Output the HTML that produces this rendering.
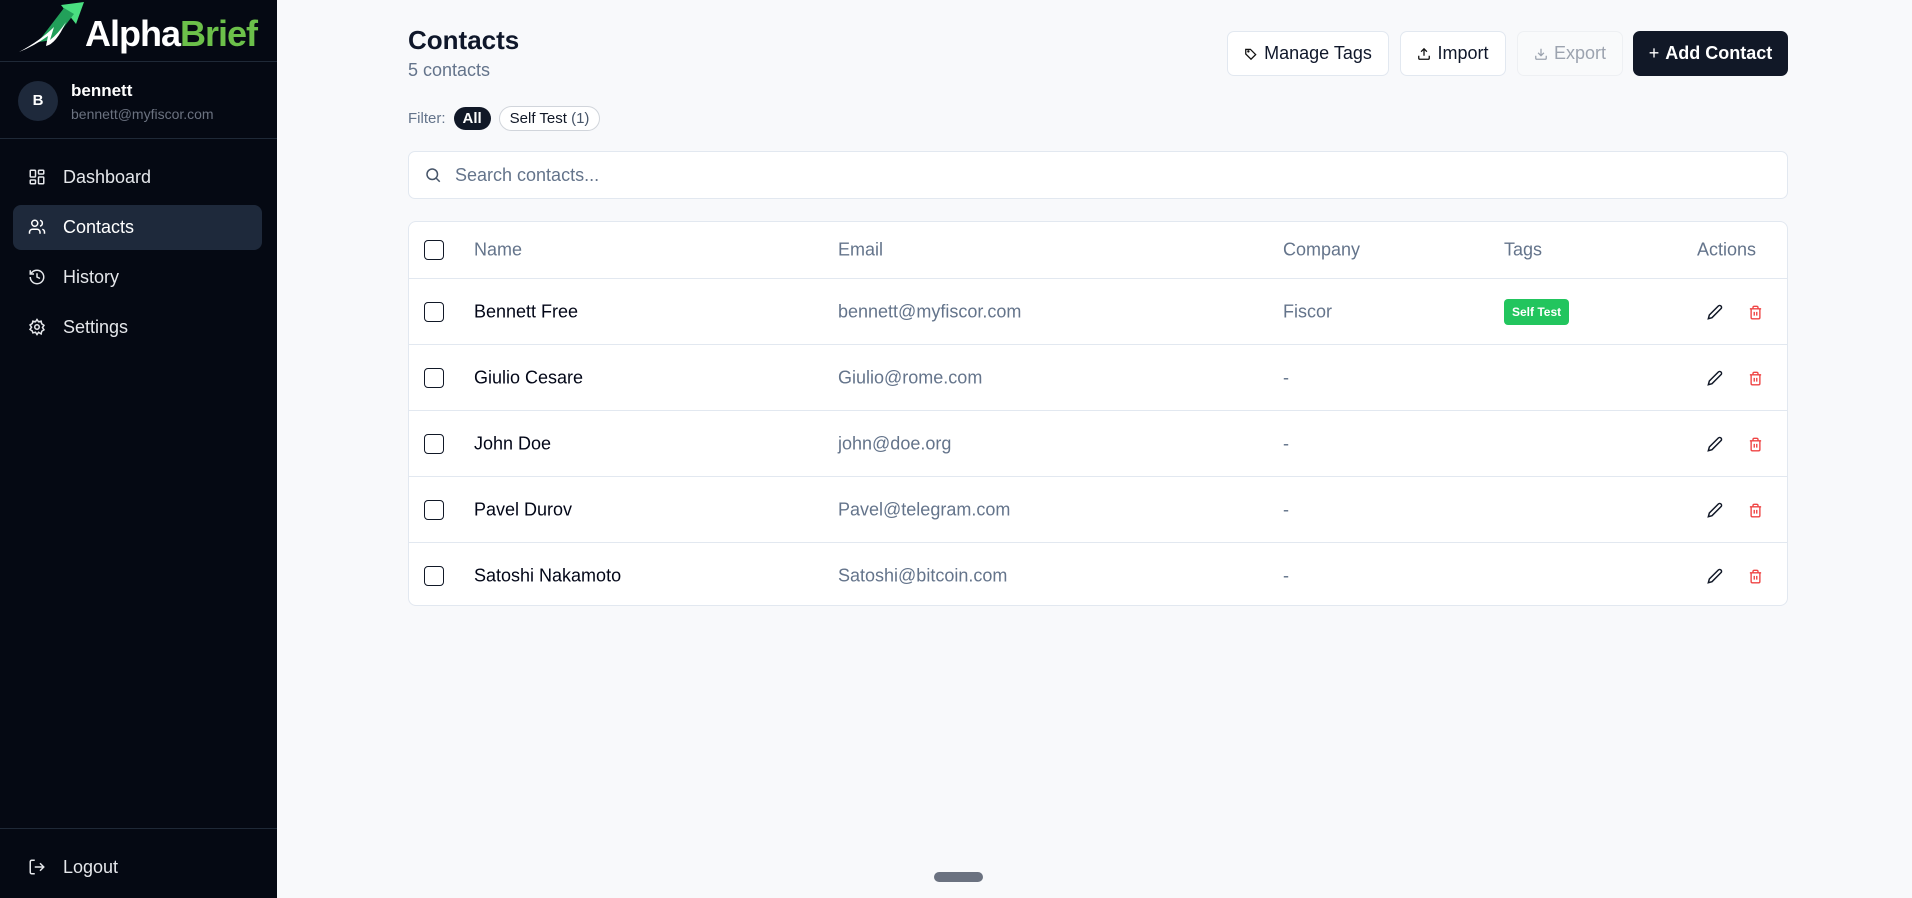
<!DOCTYPE html>
<html><head><meta charset="utf-8"><style>
*{box-sizing:border-box;margin:0;padding:0}
body{width:1912px;height:898px;overflow:hidden;background:#f8f9fb;font-family:"Liberation Sans",sans-serif;color:#0f172a;position:relative}
.sb{position:absolute;left:0;top:0;width:277px;height:898px;background:#050913;color:#fff}
.logo{height:62px;border-bottom:1px solid #1f2937;position:relative}
.logo .t{position:absolute;left:85px;top:13px;font-size:36px;font-weight:bold;letter-spacing:-1px}
.user{height:77px;border-bottom:1px solid #1f2937;position:relative}
.av{position:absolute;left:18px;top:19px;width:40px;height:40px;border-radius:50%;background:#1e293b;font-weight:bold;font-size:15px;text-align:center;line-height:40px}
.un{position:absolute;left:71px;top:19px;font-size:17px;font-weight:bold}
.ue{position:absolute;left:71px;top:44px;font-size:14px;color:#6b7280}
.nav{position:absolute;left:13px;width:249px;height:45px;border-radius:8px;font-size:18px;color:#e5e7eb;line-height:45px;padding-left:50px}
.nav svg{position:absolute;left:15px;top:13px}
.nav.act{background:#1e293b;color:#fff}
.lo{position:absolute;left:0;top:828px;width:277px;border-top:1px solid #1f2937;height:70px}
h1{position:absolute;left:408px;top:25px;font-size:26px;font-weight:bold}
.sub{position:absolute;left:408px;top:60px;font-size:18px;color:#64748b}
.flt{position:absolute;left:408px;top:106px;font-size:15px;color:#64748b;display:flex;align-items:center;gap:8px}
.pill{border-radius:14px;padding:3px 10px;font-size:15px}
.btn{position:absolute;top:31px;height:45px;border:1px solid #e2e8f0;background:#fff;border-radius:7px;font-size:18px;display:flex;align-items:center;justify-content:center;gap:6px}
.search{position:absolute;left:408px;top:151px;width:1380px;height:48px;border:1px solid #e2e8f0;background:#fff;border-radius:7px;font-size:18px;color:#64748b;padding-left:46px;line-height:46px}
.tbl{position:absolute;left:408px;top:221px;width:1380px;height:385px;border:1px solid #e2e8f0;background:#fff;border-radius:8px;overflow:hidden}
.row{position:absolute;left:0;width:100%;height:66px;border-top:1px solid #e2e8f0;font-size:18px}
.row span{position:absolute;top:50%;transform:translateY(-50%)}
.row .n{color:#020617}
.cb{width:20px;height:20px;border:1.6px solid #111827;border-radius:4px;left:15px}
.hd{height:56px;border-top:none;color:#64748b}
.pe{left:1298px;width:16px;height:16px}
.tr{left:1339px;width:15px;height:15px}
</style></head><body>
<div class="sb">
 <div class="logo">
  <svg width="70" height="55" viewBox="0 0 70 55" style="position:absolute;left:16px;top:2px"><path d="M45 3 L68 0 L60 22 Z" fill="#4ade80"/><path d="M22 40 L48 6 L58 12 L38 38 Z" fill="#22a05a"/><path d="M3 50 Q25 38 38 25 L34 38 Q42 32 50 20 Q40 42 30 44 L32 34 Q18 44 3 50 Z" fill="#fff"/></svg>
  <div class="t">Alpha<span style="color:#6cc04a">Brief</span></div>
 </div>
 <div class="user"><div class="av">B</div><div class="un">bennett</div><div class="ue">bennett@myfiscor.com</div></div>
 <div class="nav" style="top:155px"><svg width="18" height="18" viewBox="0 0 24 24" fill="none" stroke="#e5e7eb" stroke-width="2"><rect x="3" y="3" width="7" height="9" rx="1"/><rect x="14" y="3" width="7" height="5" rx="1"/><rect x="14" y="12" width="7" height="9" rx="1"/><rect x="3" y="16" width="7" height="5" rx="1"/></svg>Dashboard</div>
 <div class="nav act" style="top:205px"><svg width="18" height="18" viewBox="0 0 24 24" fill="none" stroke="#fff" stroke-width="2"><path d="M16 21v-2a4 4 0 0 0-4-4H6a4 4 0 0 0-4 4v2"/><circle cx="9" cy="7" r="4"/><path d="M22 21v-2a4 4 0 0 0-3-3.9M16 3.1a4 4 0 0 1 0 7.8"/></svg>Contacts</div>
 <div class="nav" style="top:255px"><svg width="18" height="18" viewBox="0 0 24 24" fill="none" stroke="#e5e7eb" stroke-width="2"><path d="M3 12a9 9 0 1 0 9-9 9.7 9.7 0 0 0-6.7 2.7L3 8"/><path d="M3 3v5h5M12 7v5l4 2"/></svg>History</div>
 <div class="nav" style="top:305px"><svg width="18" height="18" viewBox="0 0 24 24" fill="none" stroke="#e5e7eb" stroke-width="2"><circle cx="12" cy="12" r="3"/><path d="M12 2l2 3 3.5-.8.8 3.5 3 2-2 3 2 3-3 2-.8 3.5L14 19l-2 3-2-3-3.5.8L5.7 17.3l-3-2 2-3-2-3 3-2L6.5 4.2 10 5z"/></svg>Settings</div>
 <div class="lo"><div class="nav" style="top:16px;left:13px"><svg width="18" height="18" viewBox="0 0 24 24" fill="none" stroke="#e5e7eb" stroke-width="2"><path d="M9 21H5a2 2 0 0 1-2-2V5a2 2 0 0 1 2-2h4M16 17l5-5-5-5M21 12H9"/></svg>Logout</div></div>
</div>
<h1>Contacts</h1><div class="sub">5 contacts</div>
<div class="flt">Filter: <span class="pill" style="background:#111827;color:#fff;font-weight:bold;padding:3px 9px">All</span><span class="pill" style="border:1px solid #d1d5db;color:#111827;background:#fff">Self Test <span style="color:#475569">(1)</span></span></div>
<div class="btn" style="left:1227px;width:162px"><svg width="14" height="14" viewBox="0 0 24 24" fill="none" stroke="#111" stroke-width="2.2"><path d="M3 12V4h8l9 9-8 8z"/><circle cx="7.5" cy="7.5" r="1"/></svg>Manage Tags</div>
<div class="btn" style="left:1400px;width:106px"><svg width="14" height="14" viewBox="0 0 24 24" fill="none" stroke="#111" stroke-width="2.2"><path d="M21 15v4a2 2 0 0 1-2 2H5a2 2 0 0 1-2-2v-4M17 8l-5-5-5 5M12 3v12"/></svg>Import</div>
<div class="btn" style="left:1517px;width:106px;color:#9ca3af;background:#f9fafb;border-color:#eef0f3"><svg width="14" height="14" viewBox="0 0 24 24" fill="none" stroke="#9ca3af" stroke-width="2.2"><path d="M21 15v4a2 2 0 0 1-2 2H5a2 2 0 0 1-2-2v-4M7 10l5 5 5-5M12 15V3"/></svg>Export</div>
<div class="btn" style="left:1633px;width:155px;background:#111827;color:#fff;border-color:#111827;font-weight:bold"><span style="font-weight:normal">+</span> Add Contact</div>
<div class="search"><svg width="18" height="18" viewBox="0 0 24 24" fill="none" stroke="#475569" stroke-width="2" style="position:absolute;left:15px;top:14px"><circle cx="11" cy="11" r="7"/><path d="M21 21l-4.5-4.5"/></svg>Search contacts...</div>
<div class="tbl">
 <div class="row hd" style="top:0"><span class="cb"></span><span style="left:65px">Name</span><span style="left:429px">Email</span><span style="left:874px">Company</span><span style="left:1095px">Tags</span><span style="left:1288px">Actions</span></div>
 <div class="row" style="top:56px"><span class="cb"></span><span class="n" style="left:65px">Bennett Free</span><span style="left:429px;color:#64748b">bennett@myfiscor.com</span><span style="left:874px;color:#64748b">Fiscor</span><span style="left:1095px;background:#22c55e;color:#fff;font-size:12px;font-weight:bold;padding:6px 8px;border-radius:4px">Self Test</span>
  <svg class="pe" style="position:absolute;top:25px" viewBox="0 0 24 24" fill="none" stroke="#111827" stroke-width="2.2"><path d="M17 3a2.8 2.8 0 0 1 4 4L7.5 20.5 2 22l1.5-5.5z"/></svg><svg class="tr" style="position:absolute;top:26px" viewBox="0 0 24 24" fill="none" stroke="#ef4444" stroke-width="2.2"><path d="M3 6h18M19 6v14a2 2 0 0 1-2 2H7a2 2 0 0 1-2-2V6M8 6V4a2 2 0 0 1 2-2h4a2 2 0 0 1 2 2v2M10 11v6M14 11v6"/></svg></div>
 <div class="row" style="top:122px"><span class="cb"></span><span class="n" style="left:65px">Giulio Cesare</span><span style="left:429px;color:#64748b">Giulio@rome.com</span><span style="left:874px;color:#64748b">-</span>
  <svg class="pe" style="position:absolute;top:25px" viewBox="0 0 24 24" fill="none" stroke="#111827" stroke-width="2.2"><path d="M17 3a2.8 2.8 0 0 1 4 4L7.5 20.5 2 22l1.5-5.5z"/></svg><svg class="tr" style="position:absolute;top:26px" viewBox="0 0 24 24" fill="none" stroke="#ef4444" stroke-width="2.2"><path d="M3 6h18M19 6v14a2 2 0 0 1-2 2H7a2 2 0 0 1-2-2V6M8 6V4a2 2 0 0 1 2-2h4a2 2 0 0 1 2 2v2M10 11v6M14 11v6"/></svg></div>
 <div class="row" style="top:188px"><span class="cb"></span><span class="n" style="left:65px">John Doe</span><span style="left:429px;color:#64748b">john@doe.org</span><span style="left:874px;color:#64748b">-</span>
  <svg class="pe" style="position:absolute;top:25px" viewBox="0 0 24 24" fill="none" stroke="#111827" stroke-width="2.2"><path d="M17 3a2.8 2.8 0 0 1 4 4L7.5 20.5 2 22l1.5-5.5z"/></svg><svg class="tr" style="position:absolute;top:26px" viewBox="0 0 24 24" fill="none" stroke="#ef4444" stroke-width="2.2"><path d="M3 6h18M19 6v14a2 2 0 0 1-2 2H7a2 2 0 0 1-2-2V6M8 6V4a2 2 0 0 1 2-2h4a2 2 0 0 1 2 2v2M10 11v6M14 11v6"/></svg></div>
 <div class="row" style="top:254px"><span class="cb"></span><span class="n" style="left:65px">Pavel Durov</span><span style="left:429px;color:#64748b">Pavel@telegram.com</span><span style="left:874px;color:#64748b">-</span>
  <svg class="pe" style="position:absolute;top:25px" viewBox="0 0 24 24" fill="none" stroke="#111827" stroke-width="2.2"><path d="M17 3a2.8 2.8 0 0 1 4 4L7.5 20.5 2 22l1.5-5.5z"/></svg><svg class="tr" style="position:absolute;top:26px" viewBox="0 0 24 24" fill="none" stroke="#ef4444" stroke-width="2.2"><path d="M3 6h18M19 6v14a2 2 0 0 1-2 2H7a2 2 0 0 1-2-2V6M8 6V4a2 2 0 0 1 2-2h4a2 2 0 0 1 2 2v2M10 11v6M14 11v6"/></svg></div>
 <div class="row" style="top:320px"><span class="cb"></span><span class="n" style="left:65px">Satoshi Nakamoto</span><span style="left:429px;color:#64748b">Satoshi@bitcoin.com</span><span style="left:874px;color:#64748b">-</span>
  <svg class="pe" style="position:absolute;top:25px" viewBox="0 0 24 24" fill="none" stroke="#111827" stroke-width="2.2"><path d="M17 3a2.8 2.8 0 0 1 4 4L7.5 20.5 2 22l1.5-5.5z"/></svg><svg class="tr" style="position:absolute;top:26px" viewBox="0 0 24 24" fill="none" stroke="#ef4444" stroke-width="2.2"><path d="M3 6h18M19 6v14a2 2 0 0 1-2 2H7a2 2 0 0 1-2-2V6M8 6V4a2 2 0 0 1 2-2h4a2 2 0 0 1 2 2v2M10 11v6M14 11v6"/></svg></div>
</div>
<div style="position:absolute;left:934px;top:872px;width:49px;height:10px;border-radius:5px;background:#6b7280"></div>
</body></html>
